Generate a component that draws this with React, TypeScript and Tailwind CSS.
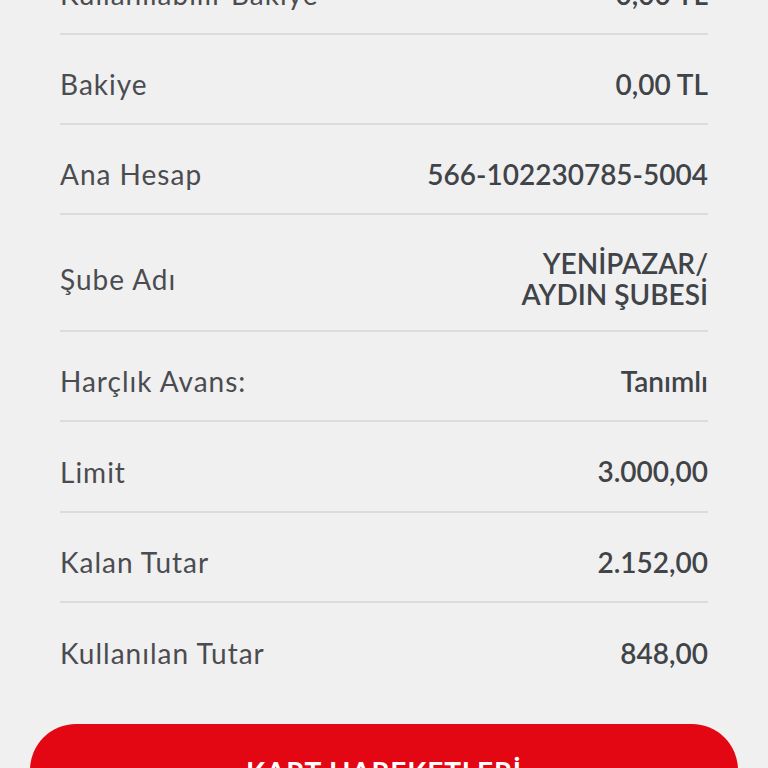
const rows: { label: string; value: string[]; h: string }[] = [
  { label: "Kullanılabilir Bakiye", value: ["0,00 TL"], h: "h-[90px] pt-[10px]" },
  { label: "Bakiye", value: ["0,00 TL"], h: "h-[90px] pt-[10px]" },
  { label: "Ana Hesap", value: ["566-102230785-5004"], h: "h-[90px] pt-[10px]" },
  { label: "Şube Adı", value: ["YENİPAZAR/", "AYDIN ŞUBESİ"], h: "h-[117px] pt-[13px]" },
  { label: "Harçlık Avans:", value: ["Tanımlı"], h: "h-[90px] pt-[10px]" },
  { label: "Limit", value: ["3.000,00"], h: "h-[91px] pt-[10px]" },
  { label: "Kalan Tutar", value: ["2.152,00"], h: "h-[90px] pt-[10px]" },
  { label: "Kullanılan Tutar", value: ["848,00"], h: "h-[90px] pt-[10px]" },
];

export default function App() {
  return (
    <div className="min-h-screen bg-[#f0f0f0] overflow-hidden font-['Lato','Open_Sans',sans-serif]">
      <div className="mt-[-55px] px-[60px]">
        {rows.map((r, i) => (
          <div
            key={r.label}
            className={`flex items-center justify-between ${r.h} ${
              i < rows.length - 1 ? "border-b-2 border-[#dcdcdc]" : ""
            }`}
          >
            <span className="text-[28px] tracking-[1px] text-[#4a4c50]">{r.label}</span>
            <div className="text-right text-[28px] leading-[31px] font-semibold text-[#404448]">
              {r.value.map((v) => (
                <div key={v}>{v}</div>
              ))}
            </div>
          </div>
        ))}
      </div>
      <div className="px-[30px] pt-[31px]">
        <button className="w-full h-[96px] rounded-[46px] bg-[#e30613] text-white text-[28px] tracking-[0.8px] font-bold">
          KART HAREKETLERİ
        </button>
      </div>
    </div>
  );
}
